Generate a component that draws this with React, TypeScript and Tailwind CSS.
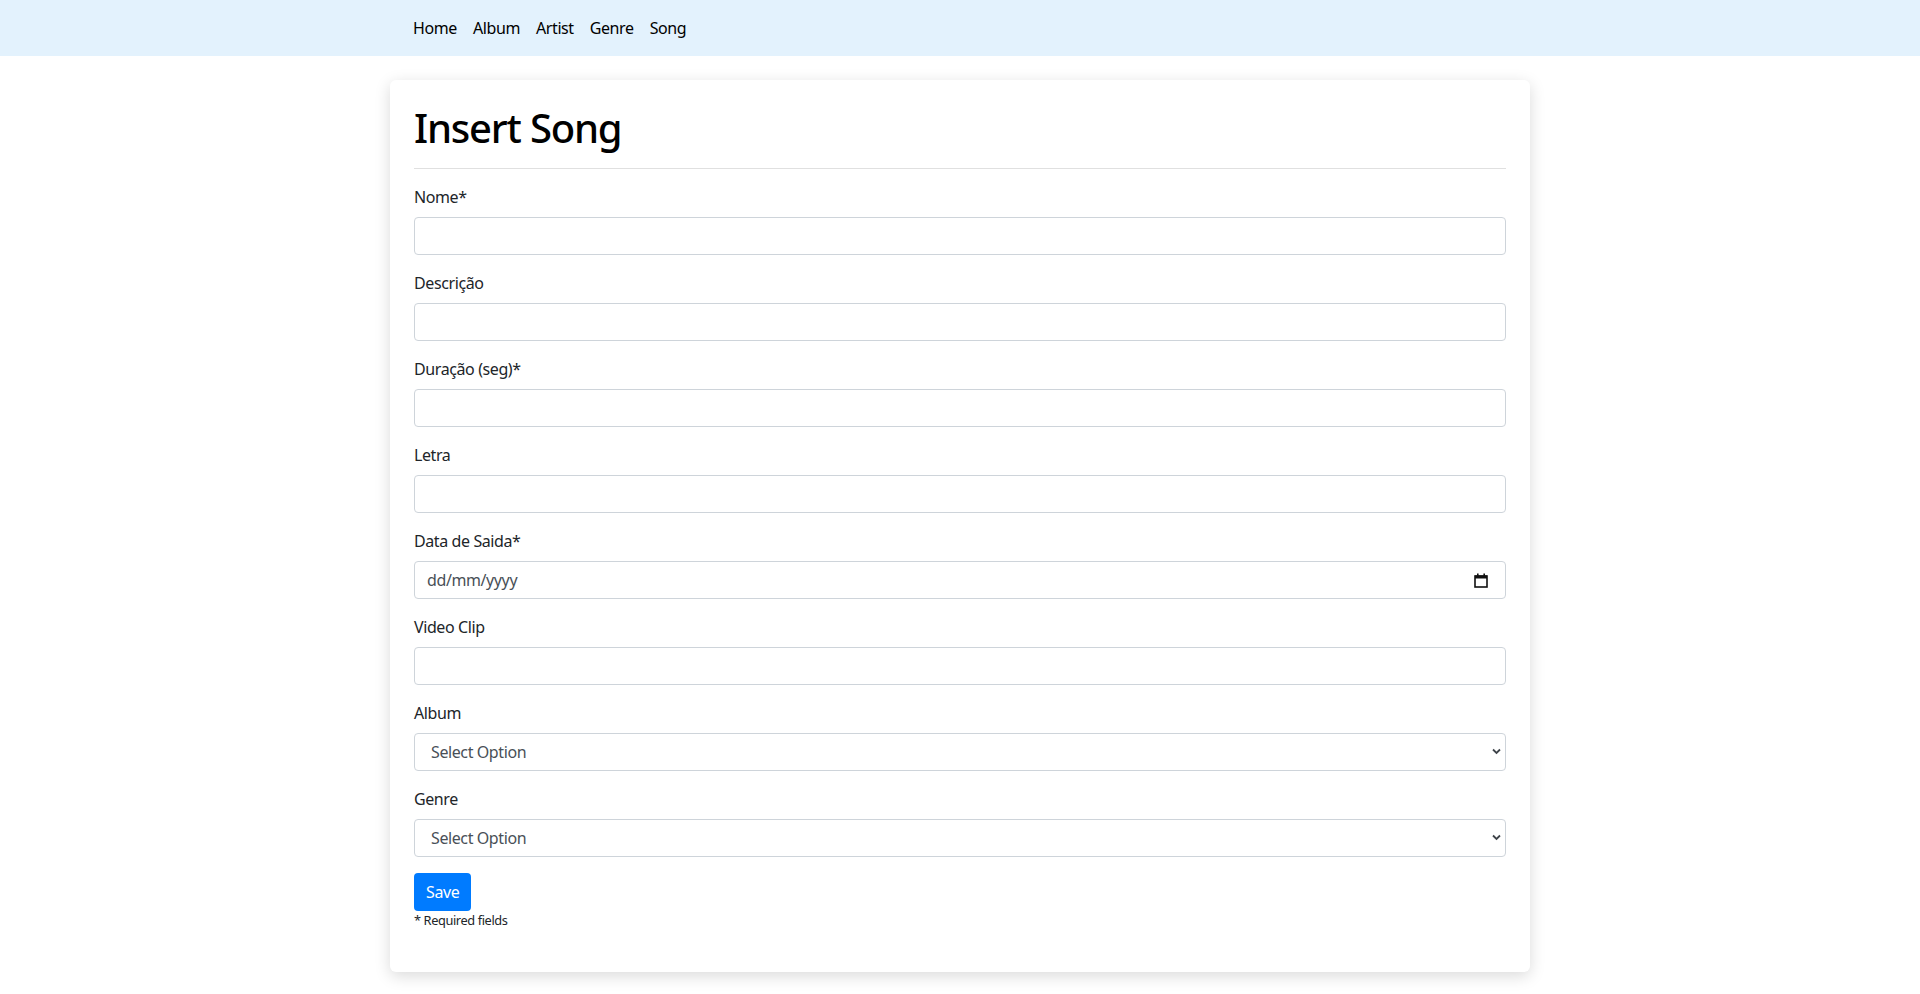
import React from "react";

type Field = {
  label: string;
  kind: "text" | "date" | "select";
};

const fields: Field[] = [
  { label: "Nome*", kind: "text" },
  { label: "Descrição", kind: "text" },
  { label: "Duração (seg)*", kind: "text" },
  { label: "Letra", kind: "text" },
  { label: "Data de Saida*", kind: "date" },
  { label: "Video Clip", kind: "text" },
  { label: "Album", kind: "select" },
  { label: "Genre", kind: "select" },
];

const navLinks = ["Home", "Album", "Artist", "Genre", "Song"];

const inputClass =
  "block w-full h-[38px] text-base text-[#495057] bg-white border border-[#ced4da] rounded-[4px] outline-none";

const FormField: React.FC<{ field: Field }> = ({ field }) => {
  return (
    <div className="mb-4">
      <label className="block mb-2 leading-6 text-base text-[#212529]">
        {field.label}
      </label>
      {field.kind === "text" && <input type="text" className={inputClass + " px-3"} />}
      {field.kind === "date" && (
        <div className="relative">
          <input
            type="text"
            placeholder="dd/mm/yyyy"
            className={inputClass + " px-3 placeholder:text-[#495057]"}
          />
          <svg
            className="absolute right-[18px] top-[12px] pointer-events-none"
            width="14"
            height="15"
            viewBox="0 0 14 15"
          >
            <rect x="1" y="3" width="12" height="11" fill="none" stroke="#111" strokeWidth="1.6" />
            <rect x="1" y="2.5" width="12" height="3" fill="#111" />
            <rect x="3" y="0.5" width="1.6" height="3" fill="#111" />
            <rect x="9.4" y="0.5" width="1.6" height="3" fill="#111" />
          </svg>
        </div>
      )}
      {field.kind === "select" && (
        <div className="relative">
          <select className={inputClass + " appearance-none pl-4 pr-6"}>
            <option>Select Option</option>
          </select>
          <svg
            className="absolute right-[5px] top-[15px] pointer-events-none"
            width="9"
            height="7"
            viewBox="0 0 9 7"
          >
            <path d="M1 1.5 L4.5 5 L8 1.5" fill="none" stroke="#3f444a" strokeWidth="1.8" />
          </svg>
        </div>
      )}
    </div>
  );
};

const App: React.FC = () => {
  return (
    <div
      className="min-h-screen bg-white text-[#212529] tracking-[-0.025em]"
      style={{ fontFamily: '"Noto Sans", "Open Sans", sans-serif' }}
    >
      <nav className="bg-[#e3f2fd] h-14">
        <div className="w-[1140px] mx-auto px-[15px] flex items-center h-full">
          {navLinks.map((link) => (
            <a key={link} href="#" className="px-2 py-2 text-base leading-6 text-black">
              {link}
            </a>
          ))}
        </div>
      </nav>
      <div className="w-[1140px] mx-auto mt-6">
        <div className="bg-white rounded-md shadow-[0_4px_16px_rgba(0,0,0,0.15)] px-6 pt-6 pb-[42px]">
          <h1 className="text-[40px] leading-[48px] font-medium tracking-[-0.03em] mb-2 text-black">
            Insert Song
          </h1>
          <hr className="border-0 border-t border-[#e0e0e0] mt-4 mb-4" />
          <form onSubmit={(e) => e.preventDefault()}>
            {fields.map((field) => (
              <FormField key={field.label} field={field} />
            ))}
            <button
              type="submit"
              className="h-[38px] px-3 rounded-[4px] bg-[#007bff] text-white text-base"
            >
              Save
            </button>
            <div className="text-[12.8px] leading-[19px] text-[#212529]">* Required fields</div>
          </form>
        </div>
      </div>
    </div>
  );
};

export default App;
